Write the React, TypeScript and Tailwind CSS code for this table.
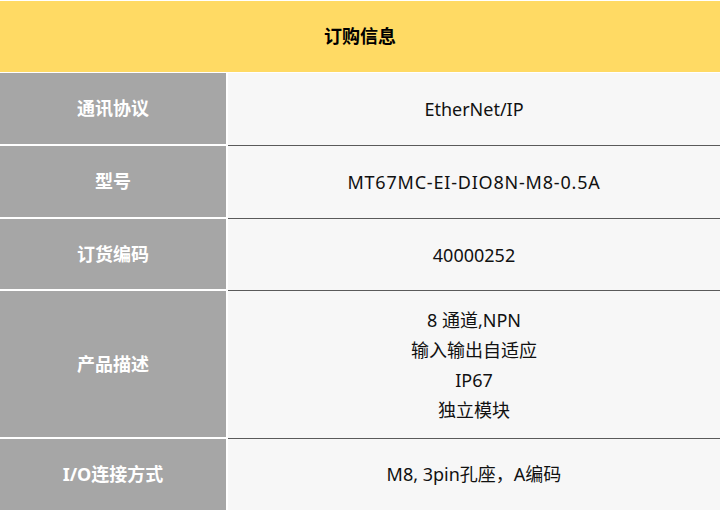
import React from "react";

const font = { fontFamily: '"Noto Sans", "Noto Sans CJK SC", sans-serif' };

type Row = { label: string; lines: string[]; left: string; right: string; track?: string };

const rows: Row[] = [
  { label: "通讯协议", lines: ["EtherNet/IP"], left: "h-[71px]", right: "h-[72px]" },
  {
    label: "型号",
    lines: ["MT67MC-EI-DIO8N-M8-0.5A"],
    left: "h-[71px]",
    right: "h-[72px]",
    track: "tracking-[0.8px]",
  },
  { label: "订货编码", lines: ["40000252"], left: "h-[70px]", right: "h-[71px]" },
  {
    label: "产品描述",
    lines: ["8 通道,NPN", "输入输出自适应", "IP67", "独立模块"],
    left: "h-[146px]",
    right: "h-[147px]",
  },
];

export default function App() {
  return (
    <div className="w-[720px] h-[510px] bg-white overflow-hidden" style={font}>
      <div className="mt-[1px] h-[71px] bg-[#ffda64] flex items-center justify-center">
        <span className="text-[18px] font-bold text-black">订购信息</span>
      </div>
      <div className="h-[1px] bg-white" />
      {rows.map((r) => (
        <div key={r.label} className="flex">
          <div className="w-[226px] flex flex-col">
            <div className={`${r.left} bg-[#a6a6a6] flex items-center justify-center`}>
              <span className="text-[18px] font-bold text-white">{r.label}</span>
            </div>
            <div className="h-[2px] bg-white" />
          </div>
          <div className="w-[2px] bg-white" />
          <div className="flex-1 flex flex-col">
            <div className={`${r.right} bg-[#f7f7f7] flex flex-col items-center justify-center`}>
              {r.lines.map((l) => (
                <div key={l} className={`text-[18px] leading-[30px] text-[#111] ${r.track ?? ""}`}>
                  {l}
                </div>
              ))}
            </div>
            <div className="h-[1px] bg-[#5a5a5a]" />
          </div>
        </div>
      ))}
      <div className="flex h-[71px]">
        <div className="w-[226px] bg-[#a6a6a6] flex items-center justify-center">
          <span className="text-[18px] font-bold text-white">I/O连接方式</span>
        </div>
        <div className="w-[2px] bg-white" />
        <div className="flex-1 bg-[#f7f7f7] flex items-center justify-center">
          <span className="text-[18px] text-[#111]">M8, 3pin孔座，A编码</span>
        </div>
      </div>
    </div>
  );
}
